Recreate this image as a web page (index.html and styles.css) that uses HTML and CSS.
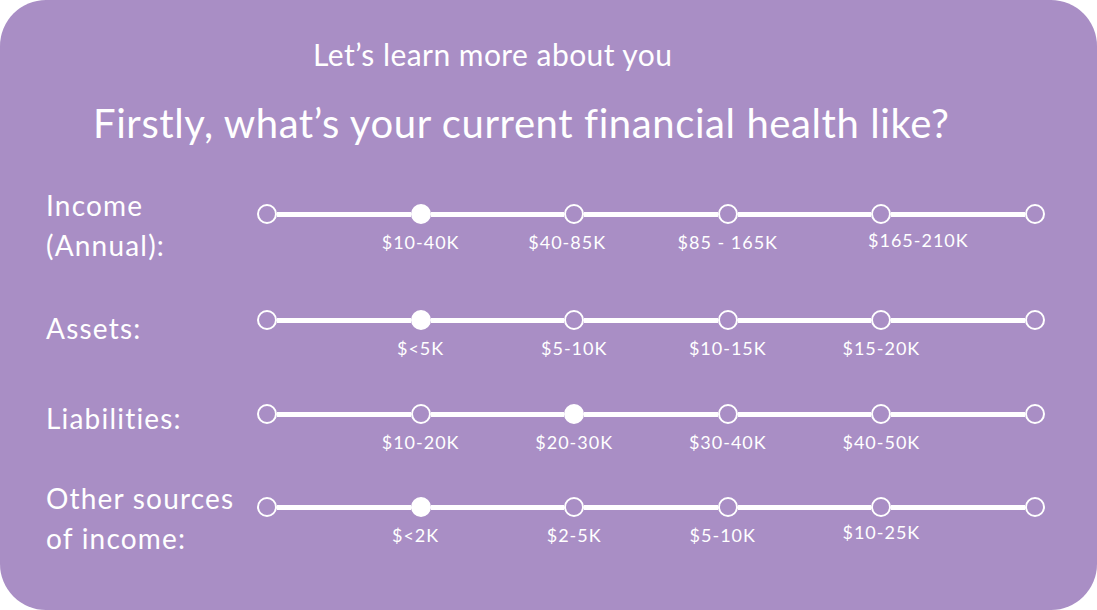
FILE: index.html
```html
<!DOCTYPE html>
<html lang="en">
<head>
<meta charset="utf-8">
<title>Financial health</title>
<link rel="stylesheet" href="styles.css">
</head>
<body>
<main class="card">
  <p class="eyebrow">Let’s learn more about you</p>
  <h1 class="title">Firstly, what’s your current financial health like?</h1>

  <section class="rows">
    <div class="row row-income">
      <div class="label">Income<br>(Annual):</div>
      <div class="slider">
        <div class="stop"><span class="dot"></span></div>
        <div class="seg"></div>
        <div class="stop"><span class="dot on"></span><span class="val">$10-40K</span></div>
        <div class="seg"></div>
        <div class="stop"><span class="dot"></span><span class="val nudge-l">$40-85K</span></div>
        <div class="seg"></div>
        <div class="stop"><span class="dot"></span><span class="val">$85 - 165K</span></div>
        <div class="seg"></div>
        <div class="stop"><span class="dot"></span><span class="val nudge-r">$165-210K</span></div>
        <div class="seg"></div>
        <div class="stop"><span class="dot"></span></div>
      </div>
    </div>

    <div class="row row-assets">
      <div class="label">Assets:</div>
      <div class="slider">
        <div class="stop"><span class="dot"></span></div>
        <div class="seg"></div>
        <div class="stop"><span class="dot on"></span><span class="val">$&lt;5K</span></div>
        <div class="seg"></div>
        <div class="stop"><span class="dot"></span><span class="val">$5-10K</span></div>
        <div class="seg"></div>
        <div class="stop"><span class="dot"></span><span class="val">$10-15K</span></div>
        <div class="seg"></div>
        <div class="stop"><span class="dot"></span><span class="val">$15-20K</span></div>
        <div class="seg"></div>
        <div class="stop"><span class="dot"></span></div>
      </div>
    </div>

    <div class="row row-liab">
      <div class="label">Liabilities:</div>
      <div class="slider">
        <div class="stop"><span class="dot"></span></div>
        <div class="seg"></div>
        <div class="stop"><span class="dot"></span><span class="val">$10-20K</span></div>
        <div class="seg"></div>
        <div class="stop"><span class="dot on"></span><span class="val">$20-30K</span></div>
        <div class="seg"></div>
        <div class="stop"><span class="dot"></span><span class="val">$30-40K</span></div>
        <div class="seg"></div>
        <div class="stop"><span class="dot"></span><span class="val">$40-50K</span></div>
        <div class="seg"></div>
        <div class="stop"><span class="dot"></span></div>
      </div>
    </div>

    <div class="row row-other">
      <div class="label">Other sources<br>of income:</div>
      <div class="slider">
        <div class="stop"><span class="dot"></span></div>
        <div class="seg"></div>
        <div class="stop"><span class="dot on"></span><span class="val nudge-l4">$&lt;2K</span></div>
        <div class="seg"></div>
        <div class="stop"><span class="dot"></span><span class="val">$2-5K</span></div>
        <div class="seg"></div>
        <div class="stop"><span class="dot"></span><span class="val nudge-l4">$5-10K</span></div>
        <div class="seg"></div>
        <div class="stop"><span class="dot"></span><span class="val nudge-up">$10-25K</span></div>
        <div class="seg"></div>
        <div class="stop"><span class="dot"></span></div>
      </div>
    </div>
  </section>
</main>
</body>
</html>
```

FILE: styles.css
```css
html, body {
  margin: 0;
  padding: 0;
  background: #ffffff;
}

.card {
  box-sizing: border-box;
  width: 1097px;
  height: 610px;
  background: #a98ec5;
  border-radius: 46px;
  color: #ffffff;
  font-family: "Lato", "Liberation Sans", sans-serif;
  padding: 34px 52px 0 46px;
  overflow: hidden;
}

.eyebrow {
  margin: 0;
  padding-left: 267px;
  font-size: 30px;
  line-height: 40px;
  font-weight: 400;
  letter-spacing: 0.45px;
}

.title {
  margin: 24px 0 0;
  padding-left: 47px;
  font-size: 40px;
  line-height: 50px;
  font-weight: 400;
  letter-spacing: 0.6px;
}

.rows {
  margin-top: 37px;
  display: flex;
  flex-direction: column;
}

.row {
  display: grid;
  grid-template-columns: 211px 1fr;
  align-items: start;
}

.label {
  font-size: 28px;
  line-height: 40px;
  letter-spacing: 1.2px;
  white-space: nowrap;
}

.slider {
  display: flex;
  align-items: flex-start;
  height: 20px;
}

.row-income .slider { margin-top: 19px; }
.row-assets { margin-top: 43px; }
.row-assets .slider { margin-top: 2px; }
.row-liab { margin-top: 50px; }
.row-liab .slider { margin-top: 6px; }
.row-other { margin-top: 40px; }
.row-other .slider { margin-top: 19px; }

.stop {
  width: 20px;
  flex: none;
  display: flex;
  flex-direction: column;
  align-items: center;
}

.dot {
  box-sizing: border-box;
  width: 20px;
  height: 20px;
  flex: none;
  border-radius: 50%;
  border: 2.5px solid #ffffff;
  background: #a98ec5;
}

.dot.on {
  background: #ffffff;
}

.seg {
  flex: 1;
  height: 5px;
  margin-top: 7.5px;
  background: #ffffff;
}

.val {
  margin-top: 8px;
  white-space: nowrap;
  font-size: 18px;
  line-height: 20px;
  letter-spacing: 1px;
}

.nudge-l { margin-right: 14px; }
.nudge-l4 { margin-right: 10px; }
.nudge-r { margin-left: 74px; margin-top: 6px; }
.nudge-up { margin-top: 5px; }
```
